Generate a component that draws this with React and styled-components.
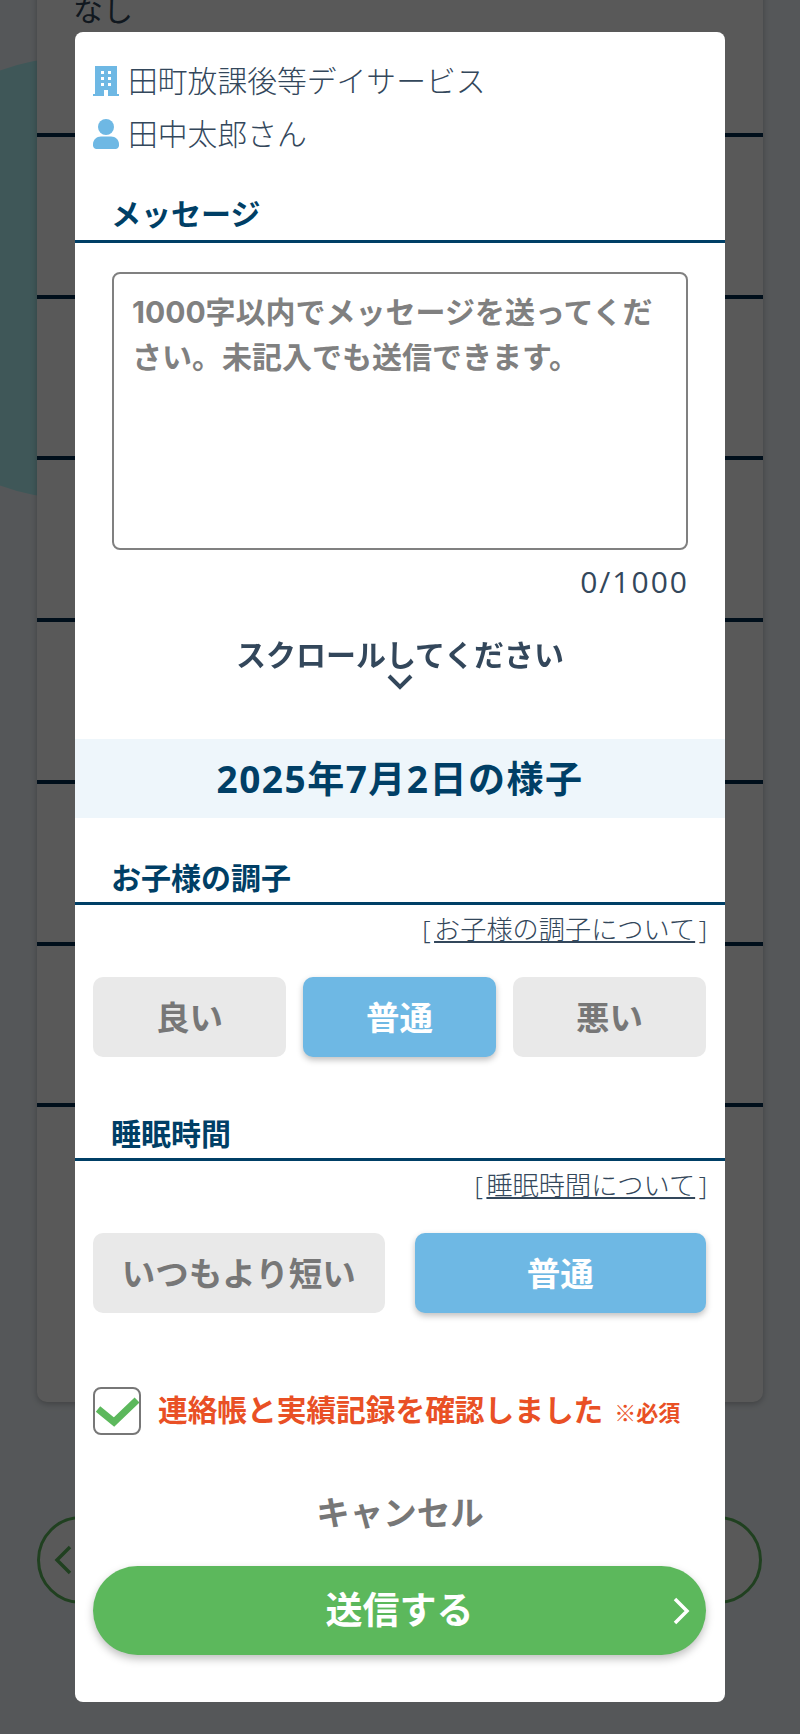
import styled, { createGlobalStyle } from 'styled-components';

const ROWS = ['なし', '', '', '', '', '', '', ''];

function BuildingIcon() {
  return (
    <svg width='26' height='30' viewBox='0 0 26 30'>
      <path
        fill='#6eb8e4'
        fillRule='evenodd'
        d='M2 0h22v28h2v2H0v-2h2zM8 5v3h3V5zm7 0v3h3V5zM8 11v3h3v-3zm7 0v3h3v-3zM8 17v3h3v-3zm7 0v3h3v-3zM11 24v6h4v-6z'
      />
    </svg>
  );
}

function PersonIcon() {
  return (
    <svg width='26' height='30' viewBox='0 0 26 30'>
      <circle cx='13' cy='8' r='8' fill='#6eb8e4' />
      <path
        fill='#6eb8e4'
        d='M8 17.5h10c4.5 0 8 3.500 8 7.500v1.500c0 1.900-1.600 3.500-3.500 3.500h-19C1.600 30 0 28.400 0 26.500V25c0-4 3.500-7.500 8-7.500z'
      />
    </svg>
  );
}

export default function App() {
  return (
    <>
      <GlobalStyle />
      <Page>
        <TealCircle />
        <BackCard>
          {ROWS.map((text, i) => (
            <BackRow key={i}>{text}</BackRow>
          ))}
        </BackCard>
        <NavCircles>
          <NavCircle>
            <svg width='20' height='30' viewBox='0 0 20 30'>
              <path d='M17 2L4 15l13 13' fill='none' stroke='#5cb85c' strokeWidth='3.5' />
            </svg>
          </NavCircle>
          <NavCircle />
        </NavCircles>
      </Page>
      <Backdrop />
      <Modal>
        <InfoList>
          <InfoRow>
            <BuildingIcon />
            <InfoText>田町放課後等デイサービス</InfoText>
          </InfoRow>
          <InfoRow>
            <PersonIcon />
            <InfoText>田中太郎さん</InfoText>
          </InfoRow>
        </InfoList>

        <SectionTitle $top={33} $line={41}>
          メッセージ
        </SectionTitle>
        <MessageBox>
          <Placeholder>1000字以内でメッセージを送ってください。未記入でも送信できます。</Placeholder>
        </MessageBox>
        <Counter>0/1000</Counter>

        <ScrollHint>
          スクロールしてください
          <HintChevron width='28' height='18' viewBox='0 0 28 18'>
            <path d='M3 3l11 11L25 3' fill='none' stroke='#33475b' strokeWidth='4' />
          </HintChevron>
        </ScrollHint>

        <DateBand>2025年7月2日の様子</DateBand>

        <SectionTitle $top={37}>お子様の調子</SectionTitle>
        <HelpLine>
          [<HelpLink>お子様の調子について</HelpLink>]
        </HelpLine>
        <ChoiceRow $cols={3} $gap={17}>
          <Choice>良い</Choice>
          <Choice $active>普通</Choice>
          <Choice>悪い</Choice>
        </ChoiceRow>

        <SectionTitle $top={54}>睡眠時間</SectionTitle>
        <HelpLine>
          [<HelpLink>睡眠時間について</HelpLink>]
        </HelpLine>
        <ChoiceRow $cols={2} $gap={30}>
          <Choice>いつもより短い</Choice>
          <Choice $active>普通</Choice>
        </ChoiceRow>

        <ConfirmRow>
          <CheckBox>
            <svg width='44' height='32' viewBox='0 0 44 32'>
              <path d='M3 14l16 13L42 5' fill='none' stroke='#5cb85c' strokeWidth='7' />
            </svg>
          </CheckBox>
          <ConfirmText>連絡帳と実績記録を確認しました</ConfirmText>
          <Required>※必須</Required>
        </ConfirmRow>

        <CancelButton>キャンセル</CancelButton>
        <SubmitButton>
          送信する
          <SubmitArrow width='20' height='30' viewBox='0 0 20 30'>
            <path d='M4 3l12 12L4 27' fill='none' stroke='#fff' strokeWidth='3.5' />
          </SubmitArrow>
        </SubmitButton>
      </Modal>
    </>
  );
}

const GlobalStyle = createGlobalStyle`
  html, body {
    margin: 0;
    padding: 0;
    height: 1734px;
    overflow: hidden;
    background: #f3f9fe;
  }
  * {
    box-sizing: border-box;
  }
  body {
    font-family: 'Open Sans', 'Noto Sans CJK JP', sans-serif;
    color: #33475b;
  }
`;

const Page = styled.div`
  position: relative;
  height: 1734px;
  padding: 0 37px;
  overflow: hidden;
`;

const TealCircle = styled.div`
  position: absolute;
  left: -145px;
  top: 57px;
  width: 442px;
  height: 442px;
  border-radius: 50%;
  background: #b4f8fc;
`;

const BackCard = styled.div`
  position: relative;
  height: 1427px;
  margin-top: -25px;
  background: #fff;
  border-radius: 0 0 10px 10px;
  box-shadow: 0 2px 6px rgba(0, 0, 0, 0.25);
`;

const BackRow = styled.div`
  height: 161.75px;
  padding: 12px 0 0 36px;
  font-size: 30px;
  line-height: 45px;
  border-bottom: 4px solid #002b4d;
  &:last-child {
    border-bottom: none;
  }
`;

const NavCircles = styled.div`
  display: flex;
  justify-content: space-between;
  margin-top: 114px;
  padding-right: 1px;
`;

const NavCircle = styled.div`
  display: flex;
  align-items: center;
  padding-left: 13px;
  width: 88px;
  height: 88px;
  border-radius: 50%;
  border: 3px solid #5cb85c;
  background: #fff;
`;

const Backdrop = styled.div`
  position: fixed;
  inset: 0;
  background: rgba(0, 0, 0, 0.65);
`;

const Modal = styled.div`
  position: fixed;
  left: 75px;
  top: 32px;
  width: 650px;
  height: 1670px;
  background: #fff;
  border-radius: 8px;
  overflow: hidden;
`;

const InfoList = styled.div`
  padding: 22px 18px 0;
`;

const InfoRow = styled.div`
  display: flex;
  align-items: center;
  gap: 9px;
  height: 53px;
`;

const InfoText = styled.span`
  margin-bottom: 3px;
  font-size: 29.8px;
  font-weight: 300;
  white-space: nowrap;
`;

const SectionTitle = styled.div`
  margin-top: ${(p) => p.$top}px;
  padding-left: 36px;
  height: 50px;
  font-size: 30px;
  line-height: ${(p) => p.$line || 45}px;
  font-weight: 700;
  color: #003f66;
  border-bottom: 3px solid #003f66;
`;

const MessageBox = styled.div`
  margin: 29px 37px 0;
  height: 278px;
  padding: 16px 18px;
  border: 2px solid #808080;
  border-radius: 8px;
`;

const Placeholder = styled.div`
  font-family: Inter, 'Noto Sans CJK JP', sans-serif;
  font-size: 30px;
  line-height: 45px;
  font-weight: 700;
  color: #808080;
`;

const Counter = styled.div`
  margin: 11px 36px 0 37px;
  text-align: right;
  font-size: 30px;
  line-height: 42px;
  letter-spacing: 2px;
`;

const ScrollHint = styled.div`
  position: relative;
  margin-top: 29px;
  height: 107px;
  text-align: center;
  font-size: 30px;
  line-height: 45px;
  font-weight: 700;
`;

const HintChevron = styled.svg`
  position: absolute;
  left: 311px;
  top: 41px;
`;

const DateBand = styled.div`
  height: 79px;
  text-align: center;
  font-size: 37px;
  line-height: 79px;
  font-weight: 700;
  letter-spacing: 1.5px;
  color: #003f66;
  background: #eef6fb;
`;

const HelpLine = styled.div`
  padding: 5px 18px 0 0;
  text-align: right;
  font-size: 26.2px;
  line-height: 39px;
  font-weight: 300;
`;

const HelpLink = styled.span`
  margin: 0 3.5px;
  text-decoration: underline;
`;

const ChoiceRow = styled.div`
  display: grid;
  grid-template-columns: repeat(${(p) => p.$cols}, 1fr);
  gap: ${(p) => p.$gap}px;
  margin: 28px 19px 0 18px;
`;

const Choice = styled.div`
  height: 80px;
  text-align: center;
  font-size: 33.5px;
  line-height: 80px;
  font-weight: 700;
  border-radius: 10px;
  color: ${(p) => (p.$active ? '#fff' : '#777')};
  background: ${(p) => (p.$active ? '#6eb8e4' : '#e9e9e9')};
  box-shadow: ${(p) => (p.$active ? '0 3px 6px rgba(0, 0, 0, 0.25)' : 'none')};
`;

const ConfirmRow = styled.div`
  display: flex;
  align-items: center;
  margin: 74px 18px 0;
  height: 48px;
  white-space: nowrap;
`;

const CheckBox = styled.div`
  display: flex;
  align-items: center;
  justify-content: center;
  width: 48px;
  height: 48px;
  margin-right: 17px;
  border: 2px solid #777;
  border-radius: 8px;
  svg {
    flex: none;
  }
`;

const ConfirmText = styled.span`
  margin-bottom: 5px;
  font-size: 29.7px;
  font-weight: 700;
  color: #e95025;
`;

const Required = styled.span`
  margin-left: 11px;
  font-size: 22px;
  font-weight: 700;
  color: #e95025;
`;

const CancelButton = styled.div`
  margin-top: 52px;
  height: 50px;
  text-align: center;
  font-size: 33.5px;
  line-height: 50px;
  font-weight: 700;
  color: #777;
`;

const SubmitButton = styled.div`
  position: relative;
  margin: 29px 19px 0 18px;
  height: 89px;
  text-align: center;
  font-size: 37px;
  line-height: 88px;
  font-weight: 700;
  color: #fff;
  background: #5cb85c;
  border-radius: 45px;
  box-shadow: 0 4px 8px rgba(0, 0, 0, 0.25);
`;

const SubmitArrow = styled.svg`
  position: absolute;
  right: 15px;
  top: 30px;
`;
